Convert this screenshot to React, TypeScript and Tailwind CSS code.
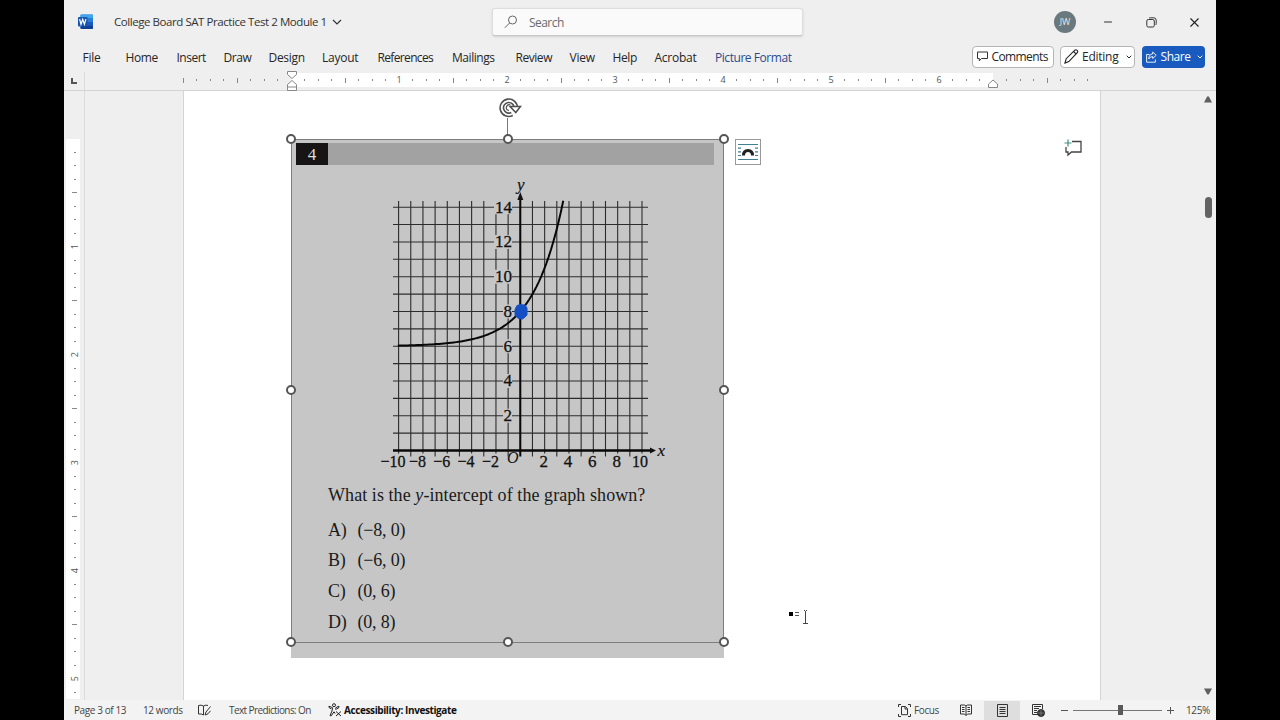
import { ChevronDown, Minus, X } from "lucide-react";

const tabs = [
  { name: "File", style: "w-[43px]" },
  { name: "Home", style: "w-[51px] tracking-[-0.4px]" },
  { name: "Insert", style: "w-[47px] tracking-[-0.5px]" },
  { name: "Draw", style: "w-[45px] tracking-[-0.4px]" },
  { name: "Design", style: "w-[53.5px] tracking-[-0.3px]" },
  { name: "Layout", style: "w-[55.5px]" },
  { name: "References", style: "w-[74.5px] tracking-[-0.65px]" },
  { name: "Mailings", style: "w-[63.5px] tracking-[-0.45px]" },
  { name: "Review", style: "w-[54px] tracking-[-0.45px]" },
  { name: "View", style: "w-[43px]" },
  { name: "Help", style: "w-[42px] tracking-[-0.4px]" },
  { name: "Acrobat", style: "w-[60.5px]" },
];

const choices = [
  { letter: "A)", value: "(−8, 0)" },
  { letter: "B)", value: "(−6, 0)" },
  { letter: "C)", value: "(0, 6)" },
  { letter: "D)", value: "(0, 8)" },
];

// eighths of an inch, from -1in to 7 3/8in
const hTicks = Array.from({ length: 68 }, (_, i) => i - 8);
const vTicks = Array.from({ length: 41 }, (_, i) => i + 1);

function WordLogo() {
  return (
    <svg width="16" height="16" viewBox="0 0 16 16">
      <rect x="2.5" y="0.5" width="12.500" height="14.5" rx="1" fill="#2b7cd3" />
      <path d="M3.500 .5h10.500a1 1 0 0 1 1 1V4h-12.500V1.500a1 1 0 0 1 1-1z" fill="#41a5ee" />
      <path d="M2.500 8h12.500v3.500h-12.500z" fill="#185abd" />
      <path d="M2.500 11.500h12.500V14a1 1 0 0 1-1 1h-10.500a1 1 0 0 1-1-1z" fill="#103f91" />
      <rect x="0" y="3" width="9.500" height="9.500" rx="1" fill="#1656ae" />
      <path d="M1.600 5l1.400 5.300 1.700-5 1.700 5 1.500-5.300" fill="none" stroke="#fff" strokeWidth="1.200" />
    </svg>
  );
}

function TitleBar() {
  return (
    <div className="flex h-11 shrink-0 items-center">
      <div className="ml-[14px] flex w-[36px]">
        <WordLogo />
      </div>
      <div className="flex w-[378px] items-center text-[11.5px] tracking-[-0.44px] whitespace-nowrap text-[#333]">
        College Board SAT Practice Test 2 Module 1
        <svg className="ml-[5px]" width="10" height="10" viewBox="0 0 10 10" fill="none" stroke="#333" strokeWidth="1.2">
          <path d="M1 3l4 4 4-4" />
        </svg>
      </div>
      <div className="flex h-[28px] w-[311px] items-center rounded-[3px] border border-[#dedede] border-b-[#c8c8c8] bg-[#fafafa] pl-[11px] shadow-sm">
        <svg width="14" height="14" viewBox="0 0 14 14" fill="none" stroke="#666" strokeWidth="1">
          <circle cx="8.500" cy="5" r="4" />
          <path d="M5.600 8L.800 12.800" />
        </svg>
        <span className="ml-[11px] pt-px text-[12px] tracking-[-0.55px] text-[#6b6b6b]">Search</span>
      </div>
      <div className="ml-[251px] flex h-[22px] w-[22px] items-center justify-center rounded-full bg-[#69797e] text-[9px] text-[#e4eaec]">
        JW
      </div>
      <Minus className="ml-[26px] h-3 w-3 text-[#333]" strokeWidth={2.200} />
      <svg className="ml-[32px]" width="11" height="11" viewBox="0 0 11 11" fill="none" stroke="#333">
        <rect x="0.800" y="2.500" width="7.500" height="7.500" rx="1.500" />
        <path d="M3 1.200Q3.300.800 4.500.800h3.300q2.400 0 2.400 2.400v3.300q0 1-.6 1.500" />
      </svg>
      <X className="ml-[30px] h-[15px] w-[15px] text-[#222]" strokeWidth={1.800} />
    </div>
  );
}

function TabRow() {
  return (
    <div className="flex h-7 shrink-0 items-center pl-[18.5px] text-[12px] tracking-[-0.25px] whitespace-nowrap text-[#262626]">
      {tabs.map((tab) => (
        <div key={tab.name} className={tab.style}>
          {tab.name}
        </div>
      ))}
      <div className="w-[257px] tracking-[-0.45px] text-[#2b4c8c]">Picture Format</div>
      <button className="mb-[3px] flex h-[22px] w-[82px] items-center rounded-[4px] border border-[#b5b5b5] bg-white pl-[4px]">
        <svg width="11" height="11" viewBox="0 0 11 11" fill="none" stroke="#333">
          <path d="M.500 1h10v6.500H4.500L2.300 9.800V7.500H.500z" />
        </svg>
        <span className="ml-[3.500px] pt-px tracking-[-0.6px]">Comments</span>
      </button>
      <button className="mb-[3px] ml-[6px] flex h-[22px] w-[75px] items-center rounded-[4px] border border-[#b5b5b5] bg-white pl-[3px]">
        <svg width="15" height="15" viewBox="0 0 15 15" fill="none" stroke="#222" strokeWidth="1.100">
          <path d="M1 14l1.200-4.300L10.800 1.200q1.200-.9 2.300.1t.2 2.400L4.800 12.600zM9.600 2.500l2.600 2.600" />
        </svg>
        <span className="ml-[3px] w-[42px] pt-px text-left">Editing</span>
        <ChevronDown className="ml-px h-2 w-2" strokeWidth={3} />
      </button>
      <button className="mb-[3px] ml-[7px] flex h-[22px] w-[63px] items-center rounded-[4px] bg-[#185abd] pl-[4px] text-white">
        <svg width="11" height="12" viewBox="0 0 11 12" fill="none" stroke="#fff" strokeWidth="0.900">
          <path d="M3.500 3.500H.600v7.700h8.800V8.500" />
          <path d="M6.700 1l3.500 3.300-3.500 3.200V5.600Q4 5.600 2.700 8q.300-4.800 4-5.100z" />
        </svg>
        <span className="ml-[3.500px] w-[34px] pt-px text-left tracking-[-0.45px]">Share</span>
        <ChevronDown className="ml-px h-2 w-2" strokeWidth={3} />
      </button>
    </div>
  );
}

function Ruler() {
  return (
    <div className="relative flex h-[19px] shrink-0 border-b border-[#d4d4d4] text-[9px] text-[#555]">
      <div className="flex w-[20.500px] shrink-0 items-center border-r border-[#dcdcdc] pl-[7px]">
        <div className="h-[6px] w-[6px] border-b-2 border-l-2 border-[#555]"></div>
      </div>
      <div className="absolute top-px left-[227px] h-[14px] w-[702px] bg-white"></div>
      <div className="relative ml-[91.800px] flex h-4">
        {hTicks.map((t) => (
          <div key={t} className="flex w-[13.500px] items-center justify-center">
            {t === 0 || t === 52 ? null : t > 0 && t < 52 && t % 8 === 0 ? (
              t / 8
            ) : t % 4 === 0 ? (
              <div className="h-[5px] w-px bg-[#888]"></div>
            ) : (
              <div className="h-[2px] w-px bg-[#888]"></div>
            )}
          </div>
        ))}
      </div>
      <svg className="absolute -top-[2px] left-[221.500px]" width="12" height="22" viewBox="0 0 12 22" fill="#fff" stroke="#888">
        <path d="M1.500 1.500h9v3L6 8.500l-4.500-4z" />
        <path d="M1.500 20.500v-6L6 10.500l4.500 4v6zM1.500 17h9" />
      </svg>
      <svg className="absolute top-[7px] left-[923px]" width="12" height="10" viewBox="0 0 12 10" fill="#fff" stroke="#888">
        <path d="M1.500 8.500v-3.500L6 1l4.500 4v3.500z" />
      </svg>
    </div>
  );
}

function VerticalRuler() {
  return (
    <div className="w-[20.500px] shrink-0 overflow-hidden border-r border-[#dcdcdc] pt-[48px] pl-[2px]">
      <div className="w-[14px] bg-white pt-[6.500px] text-[9px] text-[#555]">
        {vTicks.map((t) => (
          <div key={t} className="flex h-[13.500px] items-center justify-center pl-[3px]">
            {t % 8 === 0 ? (
              <span className="-rotate-90">{t / 8}</span>
            ) : t % 4 === 0 ? (
              <div className="h-px w-[5px] bg-[#888]"></div>
            ) : (
              <div className="h-px w-[2px] bg-[#888]"></div>
            )}
          </div>
        ))}
      </div>
    </div>
  );
}

const ux = 12.17;
const uy = 17.38;
const ox = 144.3;
const oy = 275.5;
const xs = Array.from({ length: 21 }, (_, i) => i - 10);
const ys = Array.from({ length: 14 }, (_, i) => i + 1);
// y = 6 + 2 * 1.5^x
const curve = Array.from({ length: 69 }, (_, i) => {
  const x = -10.07 + i * 0.2;
  return `${ox + x * ux},${oy - (6 + 2 * Math.pow(1.5, x)) * uy}`;
}).join(" ");

function Graph() {
  return (
    <svg
      className="ml-[85px] overflow-visible"
      width="300"
      height="300"
      viewBox="0 0 300 300"
      fontFamily="'Liberation Serif', serif"
      fontSize="17"
      fill="#111"
      stroke="none"
    >
      {xs.map((x) => (
        <path
          key={x}
          d={`M${ox + x * ux} 26V${x % 2 === 0 ? oy + 3 : oy + 6}`}
          stroke="#2c2c2c"
          strokeWidth="1.1"
        />
      ))}
      {ys.map((y) => (
        <path key={y} d={`M17 ${oy - y * uy}H272`} stroke="#2c2c2c" strokeWidth="1.1" />
      ))}
      {[2, 4, 6, 8, 10, 12, 14].map((y) => (
        <g key={y}>
          <rect
            x={y < 10 ? 127 : 118}
            y={oy - y * uy - (y === 14 ? 8 : 7)}
            width={y < 10 ? 9 : 18}
            height={y === 14 ? 15 : 14}
            fill="#c6c6c6"
          />
          <text
            x="136"
            y={oy - y * uy + 5.5}
            textAnchor="end"
            stroke="#111"
            strokeWidth="0.3"
          >
            {y}
          </text>
        </g>
      ))}
      <path d={`M${ox} ${oy + 6}V22`} stroke="#080808" strokeWidth="2" />
      <path d={`M${ox} 17l-3 8h6z`} />
      <path d={`M17 ${oy}H275`} stroke="#080808" strokeWidth="2.400" />
      <path d={`M280 ${oy}l-6-3v6z`} />
      <polyline points={curve} fill="none" stroke="#080808" strokeWidth="2" />
      <path d="M141 130.500l3-.8 5 .3 2 3v7l-2 2-2.500 2-4-.5-3.500-3v-6z" fill="#1450c4" stroke="#1450c4" strokeLinejoin="round" />
      {[-10, -8, -6, -4, -2, 2, 4, 6, 8, 10].map((x) => (
        <text
          key={x}
          x={ox + x * ux - (x < 0 ? 5.5 : x === 10 ? 2 : 1)}
          y="292"
          textAnchor="middle"
          stroke="#111"
          strokeWidth="0.3"
          textLength={x === -10 ? 25 : x === 10 ? 16 : x < 0 ? 17 : undefined}
          lengthAdjust="spacingAndGlyphs"
        >
          {String(x).replace("-", "−")}
        </text>
      ))}
      <text x="131" y="288" fontStyle="italic" fontSize="16">
        O
      </text>
      <text x="141" y="14.5" fontStyle="italic" fontSize="17" stroke="#111" strokeWidth="0.2">
        y
      </text>
      <text x="281.500" y="280.500" fontStyle="italic" fontSize="17" stroke="#111" strokeWidth="0.2">
        x
      </text>
    </svg>
  );
}

function Handle({ place }: { place: string }) {
  return (
    <div className={`absolute h-[10px] w-[10px] rounded-full border-2 border-[#555] bg-white ${place}`}></div>
  );
}

function Picture() {
  return (
    <div className="relative mt-[48px] ml-[107px] h-[519px] w-[433px] bg-[#c6c6c6] font-['Liberation_Serif',serif] text-[#1a1a1a]">
      <div className="flex h-[25px] pt-[4px] pl-[5px]">
        <div className="flex h-[21.500px] w-[32px] items-center justify-center bg-[#161414] pt-px text-[17px] text-[#ddd]">4</div>
        <div className="h-[21.500px] w-[386px] bg-[#a2a2a2]"></div>
      </div>
      <div className="mt-[11px] h-[300px]">
        <Graph />
      </div>
      <div className="mt-[8px] ml-[37px] h-[24px] text-[18px] leading-[24px] tracking-[0.07px] whitespace-nowrap">
        What is the <i>y</i>-intercept of the graph shown?
      </div>
      <div className="mt-[8px] ml-[37px] text-[18px]">
        {choices.map((c) => (
          <div key={c.letter} className="flex h-[30.600px] items-center whitespace-nowrap">
            <span className="w-[29.500px] tracking-[-0.2px]">{c.letter}</span>
            <span className="tracking-[-0.2px]">{c.value}</span>
          </div>
        ))}
      </div>

      {/* selection frame */}
      <div className="absolute top-0 left-0 h-[504px] w-[433px] border border-[#7d7d7d]"></div>
      <div className="absolute -top-[21px] left-[216px] h-[18px] w-px bg-[#777]"></div>
      <Handle place="-top-[5px] -left-[5px]" />
      <Handle place="-top-[5px] left-[212px]" />
      <Handle place="-top-[5px] left-[428px]" />
      <Handle place="top-[246px] -left-[5px]" />
      <Handle place="top-[246px] left-[428px]" />
      <Handle place="top-[498px] -left-[5px]" />
      <Handle place="top-[498px] left-[212px]" />
      <Handle place="top-[498px] left-[428px]" />
      <svg className="absolute -top-[42px] left-[207px]" width="24" height="22" viewBox="0 0 24 22" fill="none">
        <path d="M17.800 11A7 7 0 1 0 14 17" stroke="#505050" strokeWidth="5" />
        <path d="M17.800 11A7 7 0 1 0 14 17" stroke="#fff" strokeWidth="1.800" />
        <path d="M12 9.500h10.500l-4.700 6z" fill="#fff" stroke="#505050" strokeWidth="1.500" />
        <path d="M12.500 8Q9.500 7 8.500 9.800T11 13.500" stroke="#505050" strokeWidth="1.200" />
      </svg>
      {/* layout options */}
      <div className="absolute top-0 left-[444px] flex h-[26px] w-[26px] items-center justify-center border border-[#999] bg-white">
        <svg width="20" height="18" viewBox="0 0 20 18" fill="none">
          <path d="M0 1.500h20M0 16.500h20M0 5.200h3M17 5.200h3M0 8.800h3M17 8.800h3M0 12.500h3M17 12.500h3" stroke="#3f7f8f" strokeWidth="1.200" />
          <path d="M5.500 12.500q0-5 4.500-5t4.500 5" stroke="#222" strokeWidth="3" />
        </svg>
      </div>
    </div>
  );
}

function DocumentArea() {
  return (
    <div className="flex h-[609px] shrink-0">
      <VerticalRuler />
      <div className="relative ml-[98.500px] w-[918px] overflow-hidden border-x border-[#d4d4d4] bg-white">
        <Picture />
        {/* new comment */}
        <svg className="absolute top-[48px] left-[879.500px]" width="19" height="18" viewBox="0 0 19 18" fill="none">
          <path d="M8 2.500h9v10.500H7.500L4 16v-3H2V8" stroke="#444" strokeWidth="1.300" />
          <path d="M4 .500v7M.500 4h7" stroke="#3f9080" strokeWidth="1.200" />
        </svg>
        {/* I-beam pointer */}
        <svg className="absolute top-[518px] left-[605px]" width="20" height="16" viewBox="0 0 20 16">
          <rect x="0" y="3" width="4" height="4" fill="#000" />
          <path d="M6 3.500h4M6 6.500h4" stroke="#555" />
          <path d="M16.500 2v12M15 1.500h1M17 1.500h1M14 14.500h5" stroke="#444" />
        </svg>
      </div>
      <div className="flex w-[115px] flex-col items-end pr-[4px]">
        <svg className="mt-[5px]" width="8" height="7" viewBox="0 0 8 7">
          <path d="M3 .800q1-1 2 0L8 6.500H0z" fill="#606060" />
        </svg>
        <div className="mt-[94px] mr-[0.500px] h-[21px] w-[7px] rounded-full bg-[#636363]"></div>
        <svg className="mt-[470px]" width="8" height="7" viewBox="0 0 8 7">
          <path d="M0 .500h8L5 6q-1 1-2 0z" fill="#606060" />
        </svg>
      </div>
    </div>
  );
}

function StatusBar() {
  return (
    <div className="flex h-5 shrink-0 items-center bg-[#f3f3f3] pl-[10px] text-[10px] tracking-[-0.4px] whitespace-nowrap text-[#444]">
      <div className="w-[69px]">Page 3 of 13</div>
      <div className="w-[55px]">12 words</div>
      <svg width="13" height="12" viewBox="0 0 13 12" fill="none" stroke="#333">
        <path d="M5.500 2v9M5.500 2Q3 .500.500 1.500V10q3-.5 5 1M5.500 2Q8 .500 10 1.500M12.500 2.500L8 8l-1 3 3-1.200 2.500-3" />
      </svg>
      <div className="ml-[18px] w-[98.500px] tracking-[-0.6px]">Text Predictions: On</div>
      <svg width="14" height="14" viewBox="0 0 14 14" fill="none" stroke="#222">
        <circle cx="6" cy="2.200" r="1.500" />
        <path d="M1 3.200l3.500 1.500L4 8l-2 4.500 1 .5L6 8.800l1.200 1.700M11 3.200L7.800 4.700 8 7M.800 3.200l.5 1.600 2 1M11 3.200l-.3 1.600-1.800 1M8 8.500l5 4.500M13 8.500L8 13" />
      </svg>
      <div className="ml-[2.500px] w-[554px] font-bold text-[#111]">Accessibility: Investigate</div>
      <svg width="13" height="13" viewBox="0 0 13 13" fill="none" stroke="#333">
        <path d="M.500 3V.500H3M10 .500h2.500V3M.500 10v2.500H3M10 12.500h2.500V10M3.500 2.500h4l2 2.200v6h-6zM7 2.500V5h2.500" />
      </svg>
      <div className="ml-[3px] w-[46px]">Focus</div>
      <svg width="12" height="12" viewBox="0 0 12 12" fill="none" stroke="#333">
        <path d="M6 1.500v10M.500 1h4L6 2l1.500-1h4v9h-4L6 11.500 4.500 10h-4zM2 3.500h2.500M2 5.500h2.500M2 7.500h2.500M7.500 3.500H10M7.500 5.500H10M7.500 7.500H10" />
      </svg>
      <div className="ml-[12px] flex h-[19px] w-[36px] items-center justify-center bg-[#dedede]">
        <svg width="11" height="13" viewBox="0 0 11 13" fill="none" stroke="#333">
          <path d="M.500.500h10v12H.500zM2.500 3.500h6M2.500 5.500h6M2.500 7.500h6M2.500 9.500h6" />
        </svg>
      </div>
      <svg className="ml-[12px]" width="13" height="13" viewBox="0 0 13 13" fill="none" stroke="#333">
        <path d="M6 10.500H.500V.500h10V5M2 2.500h7M2 4.500h5M2 6.500h3M2 8.500h3" />
        <circle cx="9" cy="9" r="3.500" fill="#333" />
        <path d="M9 6v6M6 9h6" stroke="#999" strokeWidth="0.600" />
      </svg>
      <div className="ml-[16px] h-px w-[7px] bg-[#555]"></div>
      <div className="relative ml-[5px] flex h-[10px] w-[89px] items-center">
        <div className="h-px w-full bg-[#777]"></div>
        <div className="absolute left-[44.500px] h-[10px] w-[5px] bg-[#5a5a5a]"></div>
      </div>
      <svg className="ml-[5px]" width="7" height="7" viewBox="0 0 7 7" stroke="#555">
        <path d="M3.500 0v7M0 3.500h7" />
      </svg>
      <div className="ml-[12px]">125%</div>
    </div>
  );
}

export default function App() {
  return (
    <div className="flex h-[720px] w-[1280px] justify-center overflow-hidden bg-black">
      <div className="flex h-full w-[1152px] flex-col overflow-hidden bg-[#efefef] font-['Open_Sans','Noto_Sans',sans-serif]">
        <TitleBar />
        <TabRow />
        <Ruler />
        <DocumentArea />
        <StatusBar />
      </div>
    </div>
  );
}
